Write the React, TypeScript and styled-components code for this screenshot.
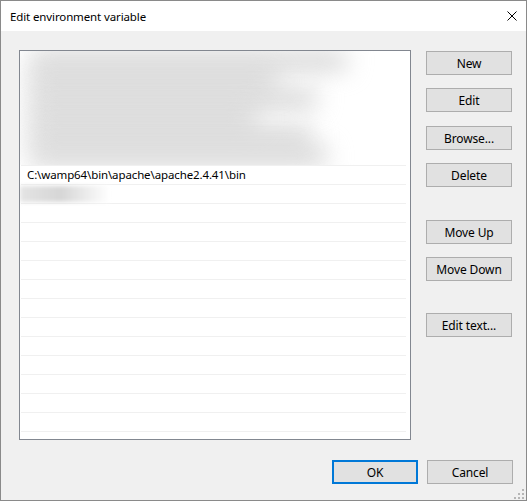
import styled, { createGlobalStyle } from "styled-components"

const GlobalStyle = createGlobalStyle`
    html, body {
        margin: 0;
        padding: 0;
        background: #ffffff;
    }
    body {
        font-family: "Segoe UI", "Noto Sans", "Open Sans", sans-serif;
        font-size: 11.5px;
        letter-spacing: -0.12px;
        color: #000000;
    }
`

const blurredRows = [320, 250, 290, 230, 285, 300]
const emptyRows = 12

export default function App() {
    return (
        <>
            <GlobalStyle />
            <Window>
                <TitleBar>
                    <Title>Edit environment variable</Title>
                    <CloseIcon width="10" height="10" viewBox="0 0 10 10">
                        <path d="M0.5 0.5 L9.5 9.5 M9.5 0.5 L0.5 9.5" stroke="#000" strokeWidth="1" />
                    </CloseIcon>
                </TitleBar>
                <Body>
                    <Main>
                        <ListBox>
                            <BlurBlock>
                                {blurredRows.map((w, i) => (
                                    <BlurBar key={i} style={{ width: w }} />
                                ))}
                            </BlurBlock>
                            {blurredRows.map((_, i) => (
                                <Row key={"b" + i} />
                            ))}
                            <Row>C:\wamp64\bin\apache\apache2.4.41\bin</Row>
                            <Row>
                                <SmallBlur />
                            </Row>
                            {Array.from({ length: emptyRows }).map((_, i) => (
                                <Row key={"e" + i} />
                            ))}
                        </ListBox>
                        <SideButtons>
                            <Button>New</Button>
                            <Button $top={13}>Edit</Button>
                            <Button $top={14}>Browse...</Button>
                            <Button $top={13}>Delete</Button>
                            <Button $top={33}>Move Up</Button>
                            <Button $top={13}>Move Down</Button>
                            <Button $top={32}>Edit text...</Button>
                        </SideButtons>
                    </Main>
                    <Footer>
                        <Button $primary>OK</Button>
                        <Button>Cancel</Button>
                    </Footer>
                    <Grip width="10" height="10" viewBox="0 0 10 10">
                        <rect x="8" y="0" width="2" height="2" fill="#b5b5b5" />
                        <rect x="4" y="4" width="2" height="2" fill="#b5b5b5" />
                        <rect x="8" y="4" width="2" height="2" fill="#b5b5b5" />
                        <rect x="0" y="8" width="2" height="2" fill="#b5b5b5" />
                        <rect x="4" y="8" width="2" height="2" fill="#b5b5b5" />
                        <rect x="8" y="8" width="2" height="2" fill="#b5b5b5" />
                    </Grip>
                </Body>
            </Window>
        </>
    )
}

const Window = styled.div`
    width: 527px;
    height: 501px;
    box-sizing: border-box;
    border: 1px solid #8a8a8a;
    display: flex;
    flex-direction: column;
    background: #f0f0f0;
`

const TitleBar = styled.div`
    height: 30px;
    flex: 0 0 30px;
    background: #ffffff;
    display: flex;
    align-items: center;
    justify-content: space-between;
    padding: 0 9px 0 9px;
`

const Title = styled.div`
    font-size: 11.5px;
    line-height: 16px;
    margin-top: 1px;
`

const CloseIcon = styled.svg`
    display: block;
`

const Body = styled.div`
    position: relative;
    flex: 1;
    padding: 19px 13px 0 18px;
    display: flex;
    flex-direction: column;
`

const Main = styled.div`
    display: flex;
    gap: 15px;
`

const ListBox = styled.div`
    position: relative;
    width: 392px;
    height: 390px;
    box-sizing: border-box;
    border: 1px solid #828790;
    background: #ffffff;
    padding: 1px 4px 0 1px;
    overflow: hidden;
`

const Row = styled.div`
    position: relative;
    height: 19px;
    box-sizing: border-box;
    border-bottom: 1px solid #f0f0f0;
    padding-left: 6px;
    line-height: 18px;
    white-space: nowrap;
`

const BlurBlock = styled.div`
    position: absolute;
    left: 0;
    top: 0;
    width: 390px;
    height: 114px;
    overflow: hidden;
    z-index: 1;
    padding-top: 2px;
    box-sizing: border-box;
    background: #ffffff;
`

const BlurBar = styled.div`
    height: 16px;
    margin: 0 0 3px 8px;
    background: #cdcdcd;
    border-radius: 8px;
    filter: blur(12px);
`

const SmallBlur = styled.div`
    position: absolute;
    left: -1px;
    top: 1px;
    width: 90px;
    height: 16px;
    background: linear-gradient(to right, #e4e4e4, #d6d6d6 45%, #ffffff);
    filter: blur(2px);
`

const SideButtons = styled.div`
    display: flex;
    flex-direction: column;
    padding-top: 1px;
`

const Button = styled.div<{ $top?: number; $primary?: boolean }>`
    width: 86px;
    height: 24px;
    box-sizing: border-box;
    margin-top: ${(p) => p.$top ?? 0}px;
    background: #e1e1e1;
    border: ${(p) => (p.$primary ? "2px solid #0078d7" : "1px solid #adadad")};
    display: flex;
    align-items: center;
    justify-content: center;
    font-size: 12px;
`

const Footer = styled.div`
    display: flex;
    justify-content: flex-end;
    gap: 9px;
    margin-top: 20px;
`

const Grip = styled.svg`
    position: absolute;
    right: 2px;
    bottom: 1px;
`
